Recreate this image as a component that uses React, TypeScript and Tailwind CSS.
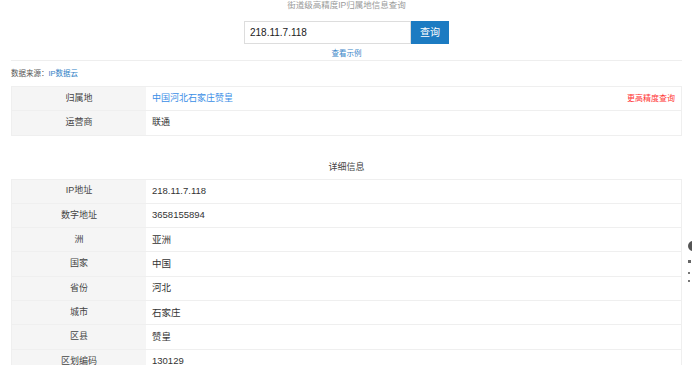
import React from 'react';

type Row = { label: string; value: string };

const detailRows: Row[] = [
  { label: 'IP地址', value: '218.11.7.118' },
  { label: '数字地址', value: '3658155894' },
  { label: '洲', value: '亚洲' },
  { label: '国家', value: '中国' },
  { label: '省份', value: '河北' },
  { label: '城市', value: '石家庄' },
  { label: '区县', value: '赞皇' },
  { label: '区划编码', value: '130129' },
];

function TableRow({ label, children }: { label: string; children: React.ReactNode }) {
  return (
    <div className="flex h-[24.3px] border-b border-[#efefef]">
      <div className="flex w-[134px] shrink-0 items-center justify-center bg-[#f5f5f5] text-[#444]">
        {label}
      </div>
      <div className="flex flex-1 items-center pl-[6px] pr-[6px] text-[9.5px] text-[#333]">{children}</div>
    </div>
  );
}

export default function App() {
  return (
    <div className="relative h-[365px] w-[692px] overflow-hidden bg-white font-['Liberation_Sans','Noto_Sans_CJK_SC',sans-serif] text-[9px]">
      <div className="mx-[11px] w-[671px]">
        {/* title */}
        <p className="text-center text-[8.5px] leading-[11px] text-[#9a9a9a]">街道级高精度IP归属地信息查询</p>

        {/* search form */}
        <div className="mt-[10px] flex justify-center">
          <div className="flex h-[23px] w-[167px] items-center border border-[#ddd] px-[5px] text-[10px] text-[#222]">
            218.11.7.118
          </div>
          <button className="h-[23px] w-[38px] bg-[#1c7bc2] text-[10px] text-white">查询</button>
        </div>
        <div className="border-b border-[#eee] pt-[5px] pb-px text-center text-[7.5px] leading-[10px] text-[#3a86c8]">
          查看示例
        </div>

        {/* source */}
        <p className="mt-[9px] text-[7.5px] leading-[8px] text-[#555]">
          数据来源：<span className="text-[#2f7fc6]">IP数据云</span>
        </p>

        {/* summary */}
        <div className="mt-[8px] border-x border-t border-[#efefef]">
          <TableRow label="归属地">
            <span className="text-[9px] text-[#3a8ee6]">中国河北石家庄赞皇</span>
            <span className="ml-auto text-[8px] text-[#f33]">更高精度查询</span>
          </TableRow>
          <TableRow label="运营商">
            <span className="text-[9px]">联通</span>
          </TableRow>
        </div>

        {/* details */}
        <p className="mt-[26px] text-center leading-[10px] text-[#444]">详细信息</p>
        <div className="mt-[7px] border-x border-t border-[#efefef]">
          {detailRows.map((r) => (
            <TableRow key={r.label} label={r.label}>
              {r.value}
            </TableRow>
          ))}
        </div>
      </div>

      {/* floating widget cut off at the right edge */}
      <div className="absolute left-[688px] top-[241px] flex flex-col items-start gap-[9px]">
        <div className="h-[10px] w-[10px] rounded-full bg-[#555]" />
        <div className="h-[3px] w-[3px] bg-[#666]" />
        <div className="flex flex-col gap-[6px]">
          <div className="h-[2px] w-[2px] bg-[#777]" />
          <div className="h-[2px] w-[2px] bg-[#777]" />
        </div>
      </div>
    </div>
  );
}
